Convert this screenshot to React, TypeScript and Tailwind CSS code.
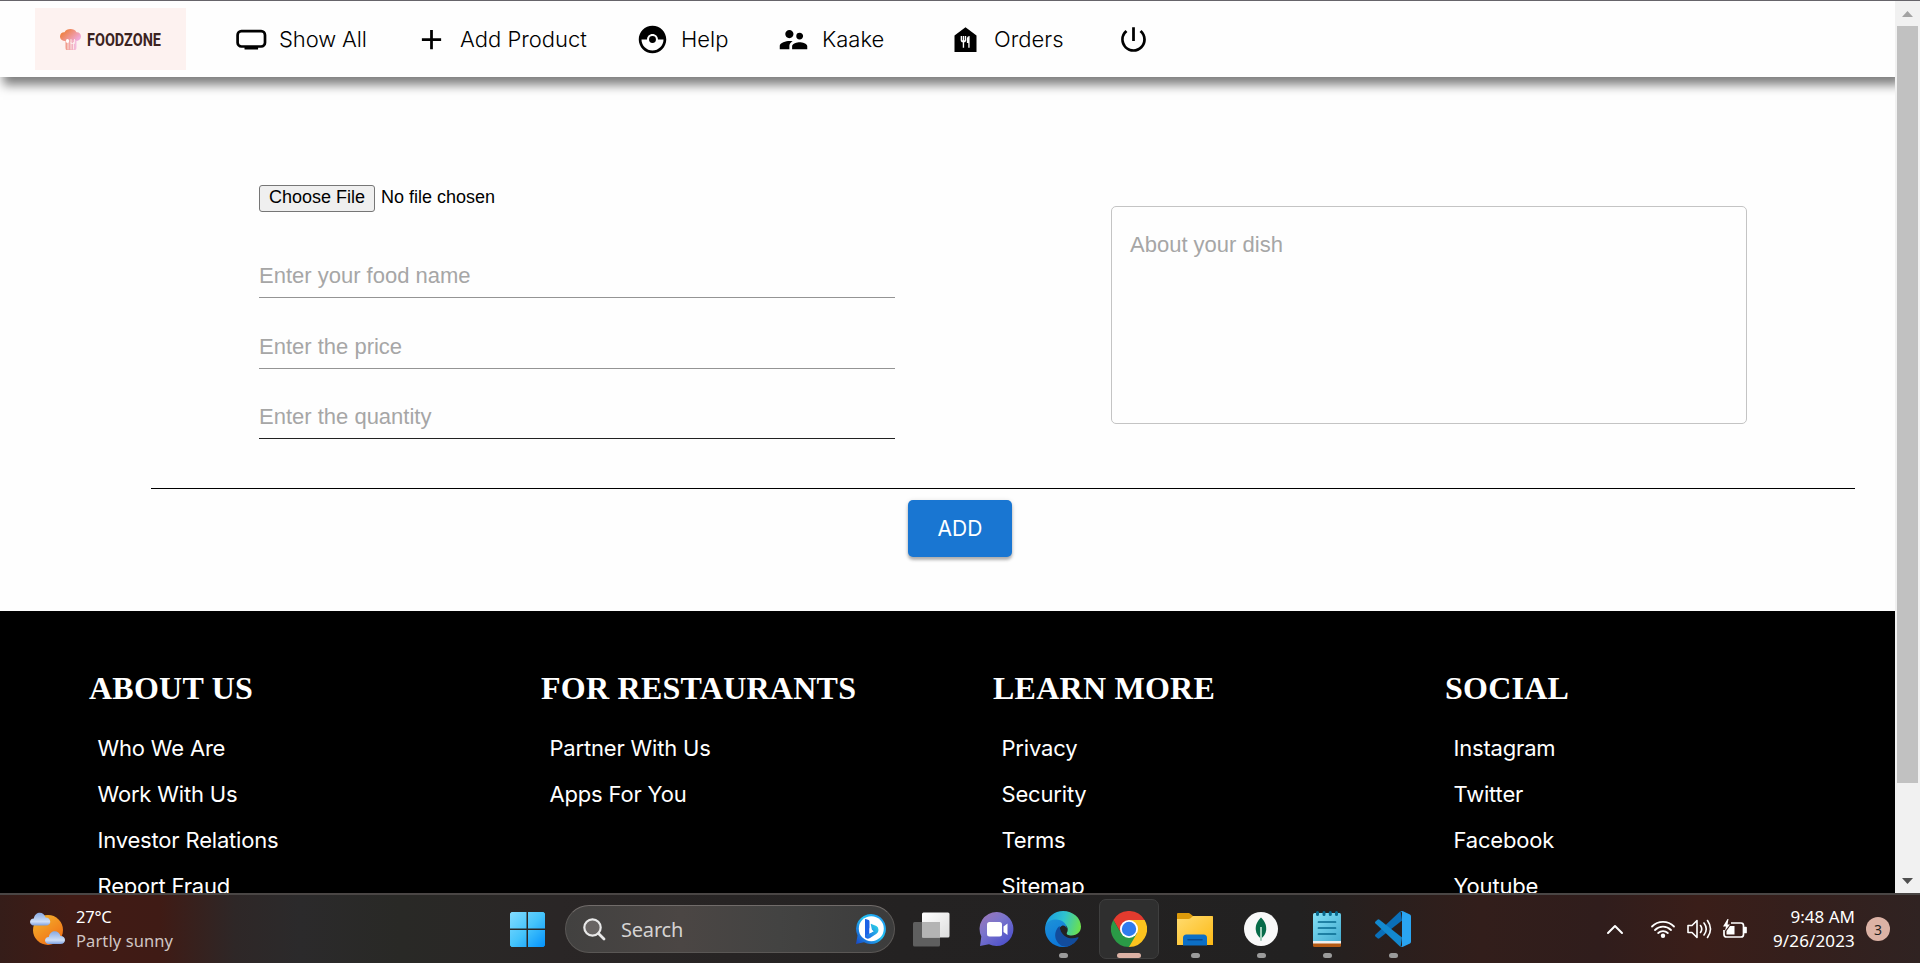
import React from "react";
import { MdAdd, MdCatchingPokemon, MdSupervisorAccount, MdFoodBank, MdPowerSettingsNew } from "react-icons/md";

const columns = [
  { title: "ABOUT US", links: ["Who We Are", "Work With Us", "Investor Relations", "Report Fraud"] },
  { title: "FOR RESTAURANTS", links: ["Partner With Us", "Apps For You"] },
  { title: "LEARN MORE", links: ["Privacy", "Security", "Terms", "Sitemap"] },
  { title: "SOCIAL", links: ["Instagram", "Twitter", "Facebook", "Youtube"] },
];

const fields = [
  { label: "Enter your food name", className: "mt-[41px] h-[45px] border-[#949494]" },
  { label: "Enter the price", className: "mt-[26px] h-[45px] border-[#949494]" },
  { label: "Enter the quantity", className: "mt-[25px] h-[45px] border-[#212121]" },
];

function TvIcon() {
  return (
    <svg width="31" height="21" viewBox="0 0 31 21" className="block">
      <rect x="1.6" y="2.1" width="27.4" height="15.400" rx="3.8" fill="none" stroke="#000" strokeWidth="2.7" />
      <rect x="8.5" y="18" width="13.600" height="2.600" rx="0.6" />
    </svg>
  );
}

function Logo() {
  return (
    <div className="ml-[35px] flex h-[62px] w-[151px] items-center bg-[#fdf2f0] pl-[25px]">
      <svg width="21" height="21" viewBox="0 0 21 21" className="block">
        <defs>
          <linearGradient id="hat" x1="0" y1="0" x2="1" y2="0.6">
            <stop offset="0.15" stopColor="#ee7d35" />
            <stop offset="1" stopColor="#f0a8d6" />
          </linearGradient>
          <linearGradient id="fork" x1="0" y1="0" x2="1" y2="0">
            <stop stopColor="#f19a86" />
            <stop offset="1" stopColor="#f4bfe2" />
          </linearGradient>
        </defs>
        <path d="M4.500 12C1 11.500 0 9 0 7.500 0 4.500 2.500 3 4.500 3.300 5.500 1 8 0 10.500 0c2.500 0 5 1 6 3.300C19 3 21 5 21 7.500c0 2.500-2 4-4.500 4.500z" fill="url(#hat)" />
        <path d="M5.500 11h11v7c0 2-.5 3-1.500 3H6.500c-.7 0-1-1-1-3z" fill="url(#fork)" />
        <path d="M8 11v9.500M11 13v7.500M13.500 13v7.500" stroke="#fdf2f0" strokeWidth="0.800" />
        <ellipse cx="7.500" cy="12" rx="1.600" ry="2" fill="#fff" />
        <path d="M11 10v4.500h3.500V10" fill="none" stroke="#fdf2f0" strokeWidth="0.800" />
      </svg>
      <svg width="78" height="22" viewBox="0 0 78 22" className="ml-[5px] block overflow-visible">
        <text x="1" y="18.200" textLength="74" lengthAdjust="spacingAndGlyphs" fill="#3b2320" className="font-['Roboto'] text-[19px] font-bold">FOODZONE</text>
      </svg>
    </div>
  );
}

function Nav() {
  return (
    <nav className="relative z-10 flex h-[76px] shrink-0 items-center bg-[#fefefe] font-['Inter',sans-serif] text-[22px] font-light text-black shadow-[5px_6px_10px_2px_rgba(0,0,0,0.5)]">
      <Logo />
      <div className="ml-[50px] flex w-[179px] items-center gap-[12px]"><TvIcon /><span className="tracking-[-0.1px]">Show All</span></div>
      <div className="flex w-[221px] items-center gap-[12px]"><MdAdd size={33} /><span>Add Product</span></div>
      <div className="flex w-[141px] items-center gap-[12px]"><MdCatchingPokemon size={33} /><span>Help</span></div>
      <div className="flex w-[172px] items-center gap-[12px]"><MdSupervisorAccount size={33} /><span>Kaake</span></div>
      <div className="flex w-[168px] items-center gap-[12px]"><MdFoodBank size={33} /><span>Orders</span></div>
      <MdPowerSettingsNew size={33} />
    </nav>
  );
}

function ProductForm() {
  return (
    <main className="h-[534px] shrink-0 bg-[#fefefe] font-['Liberation_Sans',sans-serif]">
      <div className="flex h-[411px] items-start pl-[259px]">
        <div className="w-[636px] pt-[108px]">
          <div className="flex items-start text-[18px] text-black">
            <button className="h-[27px] w-[116px] rounded-[3px] border border-[#767676] bg-[#efefef] pb-[2px] leading-[23px]">Choose File</button>
            <span className="ml-[6px] leading-[25px]">No file chosen</span>
          </div>
          {fields.map((f) => (
            <div key={f.label} className={`${f.className} border-b text-[22px] leading-[46px] text-[#a6a6a6]`}>{f.label}</div>
          ))}
        </div>
        <div className="ml-[216px] mt-[129px] h-[218px] w-[636px] rounded-[5px] border border-[#c4c4c4] pl-[18px] pt-[21px] text-[22px] leading-[34px] text-[#a6a6a6]">
          About your dish
        </div>
      </div>
      <div className="ml-[151px] h-px w-[1704px] bg-black" />
      <div className="flex pl-[908px] pt-[11px]">
        <button className="h-[57px] w-[104px] rounded-[5px] bg-[#1976d2] font-['Inter',sans-serif] text-[21px] font-normal text-white shadow-[0_3px_3px_rgba(0,0,0,0.25),0_1px_5px_rgba(0,0,0,0.15)]">ADD</button>
      </div>
    </main>
  );
}

function Footer() {
  return (
    <footer className="flex min-h-0 grow bg-black pl-[89px] text-white">
      {columns.map((c) => (
        <div key={c.title} className="w-[452px] shrink-0 pt-[58px]">
          <h2 className="whitespace-nowrap font-['Liberation_Serif',serif] text-[32px] font-bold leading-[38px] tracking-[0.25px]">{c.title}</h2>
          <ul className="mt-[18px] pl-[8.500px] font-['Inter',sans-serif] text-[22px] tracking-[-0.18px]">
            {c.links.map((l) => <li key={l} className="h-[46px] leading-[46px]">{l}</li>)}
          </ul>
        </div>
      ))}
    </footer>
  );
}

function Scrollbar() {
  return (
    <div className="flex w-[25px] flex-col items-center bg-[#f1f1f1]">
      <svg width="25" height="25" viewBox="0 0 25 25" className="block"><path d="M7 16h11l-5.500-6z" fill="#a3a3a3" /></svg>
      <div className="h-[757px] w-[21px] bg-[#c1c1c1]" />
      <div className="grow" />
      <svg width="25" height="25" viewBox="0 0 25 25" className="block"><path d="M7 10h11l-5.500 6z" fill="#505050" /></svg>
    </div>
  );
}

function Weather() {
  return (
    <svg width="37" height="34" viewBox="0 0 37 34" className="block">
      <defs>
        <linearGradient id="sun" x1="0" y1="0" x2="0.7" y2="1"><stop stopColor="#f2b92f" /><stop offset="1" stopColor="#f26f16" /></linearGradient>
        <linearGradient id="cloud" x1="0" y1="0" x2="0" y2="1"><stop stopColor="#86a9e3" /><stop offset="0.700" stopColor="#cfdff7" /><stop offset="1" stopColor="#7da0e0" /></linearGradient>
      </defs>
      <circle cx="19" cy="18" r="15" fill="url(#sun)" />
      <path d="M5 13.500C-.5 13.500 0 6.500 4.800 6.500 6-1 15-1 16.500 5.500c6 0 6.500 8 .5 8z" fill="url(#cloud)" />
      <path d="M20 32C14.500 32 15 25 19.800 25 21 17.500 30 17.500 31.500 24c6 0 6 8 0 8z" fill="url(#cloud)" />
    </svg>
  );
}

function Start() {
  return (
    <svg width="35" height="35" viewBox="0 0 35 35" className="block">
      <defs><linearGradient id="win" gradientUnits="userSpaceOnUse" x1="0" y1="0" x2="35" y2="35"><stop stopColor="#83dcff" /><stop offset="0.500" stopColor="#45c4fb" /><stop offset="1" stopColor="#0492fb" /></linearGradient></defs>
      <path d="M1.500 0H16.500V16.500H0V1.500zM18 0H33.500L35 1.500V16.500H18zM0 18H16.500V35H1.500L0 33.500zM18 18H35V33.500L33.500 35H18z" fill="url(#win)" />
    </svg>
  );
}

function Bing() {
  return (
    <svg width="30" height="30" viewBox="0 0 30 30" className="block">
      <defs>
        <linearGradient id="bing" x1="1" y1="0" x2="0" y2="1"><stop stopColor="#1a8df0" /><stop offset="0.450" stopColor="#22c3f3" /><stop offset="1" stopColor="#1745c8" /></linearGradient>
        <linearGradient id="bowl" x1="1" y1="0" x2="0" y2="1"><stop stopColor="#2bdce6" /><stop offset="1" stopColor="#1e5fe6" /></linearGradient>
      </defs>
      <path d="M15 0a15 15 0 1 1-7 28.300L0 30l1.500-8.500A15 15 0 0 1 15 0z" fill="url(#bing)" />
      <circle cx="15.300" cy="14.700" r="12.500" fill="#fff" />
      <path d="M9 5.500q0-.6.600-.4l3 1q.9.400.9 1.300V20l-4.500 4z" fill="#1c62e6" />
      <path d="M14.800 10.500q-.3-.9.600-.6l5 2.200q2.100 1.100 2.100 3.800 0 2.500-2 3.800l-6.500 4.300q-2 1.200-3.800.3Q9 23.300 9 21.500l4.500-2 4-2.300-1.500-1z" fill="url(#bowl)" />
      <path d="M13.500 14l4 3.200-4 2.300z" fill="#fff" />
    </svg>
  );
}

function TaskView() {
  return (
    <svg width="37" height="35" viewBox="0 0 37 35" className="block">
      <defs><linearGradient id="tv" x1="0" y1="0" x2="1" y2="1"><stop stopColor="#fff" /><stop offset="1" stopColor="#ddd" /></linearGradient></defs>
      <rect x="0" y="10" width="27" height="24.500" rx="1.500" fill="#5f5f5f" />
      <rect x="9" y="0.500" width="27.500" height="25" rx="1.500" fill="url(#tv)" />
      <path d="M9 10h18v15.500H9z" fill="#b4b4b4" />
    </svg>
  );
}

function Chat() {
  return (
    <svg width="36" height="36" viewBox="0 0 36 36" className="block">
      <defs><linearGradient id="chat" x1="0" y1="0" x2="0.800" y2="1"><stop stopColor="#a077b5" /><stop offset="0.450" stopColor="#7a74cc" /><stop offset="1" stopColor="#4a4ecb" /></linearGradient></defs>
      <path d="M18 1a17 17 0 1 1-8 32.300L1 35l1.300-9.500A17 17 0 0 1 18 1z" fill="url(#chat)" />
      <rect x="8" y="11" width="15" height="14.500" rx="2.500" fill="#fff" />
      <path d="M24.500 15.500l4-3v11.500l-4-3z" fill="#fff" />
    </svg>
  );
}

function Edge() {
  return (
    <svg width="36" height="36" viewBox="0 0 36 36" className="block">
      <defs>
        <linearGradient id="e1" x1="0" y1="0.300" x2="1" y2="0.500"><stop stopColor="#1b9de2" /><stop offset="0.500" stopColor="#2fc3cf" /><stop offset="1" stopColor="#6be04f" /></linearGradient>
        <linearGradient id="e2" x1="0" y1="0" x2="0.500" y2="1"><stop stopColor="#1d92d8" /><stop offset="1" stopColor="#0b76da" /></linearGradient>
      </defs>
      <path d="M.5 14.500C2.500 5.500 9.500 0 18 0c10 0 18 7 18 15.500 0 5.500-4 9-9.500 9-3.500 0-5.500-1.300-4.500-3 2-3.500 0-8-5-9.500C11 10 4 11 .5 14.500z" fill="url(#e1)" />
      <path d="M0 18C0 11 5.500 8.500 11 8.500c6 0 11 4 10.500 9-.5-2.500-2.500-3.500-4-3-4 1.300-4.500 7-2.500 10.500 3 6 10 8 15 5.500C26.500 34.500 22 36 18 36 8 36 0 28 0 18z" fill="url(#e2)" />
      <path d="M14.500 15c-6 5-6 14.500 1.500 19.500 2 1 4.500 1.500 7 1 4.500-1.500 8-4.500 10.500-8.500.3-.7-.2-1-.8-.7C26 29 16 27 14.500 15z" fill="#124c9c" />
    </svg>
  );
}

function Chrome() {
  return (
    <svg width="36" height="36" viewBox="0 0 36 36" className="block">
      <path d="M2.400 9A18 18 0 0 1 33.600 9L26 18 10.200 22.500z" fill="#e33b2e" />
      <path d="M33.600 9A18 18 0 0 1 18 36l-2-7 9.800-6.500L18 9z" fill="#fcc31e" />
      <path d="M2.400 9A18 18 0 0 0 18 36l7.800-13.500H10.200z" fill="#2a9a46" />
      <circle cx="18" cy="18" r="9" fill="#fff" />
      <circle cx="18" cy="18" r="7.200" fill="#2f7bee" />
    </svg>
  );
}

function Folder() {
  return (
    <svg width="36" height="34" viewBox="0 0 36 34" className="block">
      <defs><linearGradient id="fold" x1="0" y1="0" x2="1" y2="1"><stop stopColor="#ffdc70" /><stop offset="1" stopColor="#fdb914" /></linearGradient></defs>
      <path d="M1 1h10.500q1 0 1.700.7L16 4H36V12H0V2q0-1 1-1z" fill="#dd9b0b" />
      <path d="M0 7h11.500q1 0 2-.8L16 4h18.500Q36 4 36 5.500V33H0z" fill="url(#fold)" />
      <path d="M6 33.500V26q0-3.500 3.500-3.500h17Q30 22.500 30 26v7.500z" fill="#0c6fc6" />
      <path d="M11 27.700h14" stroke="#084a91" strokeWidth="1.500" strokeLinecap="round" />
    </svg>
  );
}

function Mongo() {
  return (
    <svg width="34" height="34" viewBox="0 0 34 34" className="block">
      <circle cx="17" cy="17" r="17" fill="#f8f8f8" />
      <path d="M17 5.500c5 5 5.500 9 5.200 12.500-.4 4-2.700 6.500-4.400 8L17.500 28.500h-1L16.200 26c-2-1.700-4-4-4.400-8C11.500 14.500 12 10.500 17 5.500z" fill="#076b49" />
      <path d="M17 15v13" stroke="#9fcfb9" strokeWidth="2" />
    </svg>
  );
}

function Notepad() {
  return (
    <svg width="28" height="36" viewBox="0 0 28 36" className="block">
      <defs><linearGradient id="note" x1="0" y1="0" x2="1" y2="1"><stop stopColor="#84e1f7" /><stop offset="1" stopColor="#44acd0" /></linearGradient></defs>
      <rect x="0" y="28" width="28" height="8" rx="1.500" fill="#b55a14" />
      <path d="M0 28h28v4.500H0z" fill="#eee" />
      <path d="M1.500 2h25Q28 2 28 3.500V30H0V3.500Q0 2 1.500 2z" fill="url(#note)" />
      <path d="M5.500 11h17M5.500 17h17M5.500 23h17" stroke="#07698e" strokeWidth="1.700" strokeLinecap="round" />
      <path d="M4.500 1.500v2M11 1.500v2M17.300 1.500v2M23.500 1.500v2" stroke="#07698e" strokeWidth="3" strokeLinecap="round" />
    </svg>
  );
}

function Code() {
  return (
    <svg width="36" height="36" viewBox="0 0 36 36" className="block">
      <path d="M25.500 0L27 9.500 4.500 27.300q-1 .7-2 0L.5 25.500q-1-1 0-2z" fill="#0a6fb9" />
      <path d="M25.500 36L27 26.500 4.500 8.700q-1-.7-2 0L.5 10.500q-1 1 0 2z" fill="#1389cf" />
      <path d="M25.500.2Q26.500-.3 28 .3L35 3.500Q36 4 36 5.500v25q0 1.500-1 2L28 35.700q-1.500.6-2.500-.2 1.500.5 1.500-1.500V2q0-2-1.500-1.800z" fill="#2aa5f2" />
    </svg>
  );
}

function TaskApp({ children, active = false, dot = true }: { children: React.ReactNode; active?: boolean; dot?: boolean }) {
  return (
    <div className={`flex h-[60px] w-[60px] shrink-0 flex-col items-center rounded-[7px] border ${active ? "border-[#3f3f3f] bg-[#2f2f2f]" : "border-transparent"}`}>
      <div className="flex h-[53px] items-center pt-[4px]">{children}</div>
      {dot && <div className={`h-[5px] shrink-0 rounded-full ${active ? "w-[24px] bg-[#dcb2a5]" : "w-[9px] bg-[#9b9b9b]"}`} />}
    </div>
  );
}

function Taskbar() {
  return (
    <div className="flex h-[70px] shrink-0 items-center border-t-2 border-[#4a4645] bg-[linear-gradient(90deg,#351d19_0px,#411b15_70px,#3f1b15_160px,#2e2727_235px,#2b2a2b_300px,#292926_400px,#2a2626_560px,#242222_900px,#222121_1300px,#2a1f1d_1390px,#321e1b_1480px,#301d1c_1600px,#3a1e19_1700px,#351f1c_1790px,#302322_1920px)] font-['Noto_Sans',sans-serif] text-white">
      <div className="ml-[29px] flex w-[481px] items-center gap-[10px]">
        <Weather />
        <div className="text-[16.500px] leading-[24px]"><div className="tracking-[-0.2px]">27°C</div><div className="tracking-[0.1px] text-[#d0c5c3]">Partly sunny</div></div>
      </div>
      <Start />
      <div className="ml-[20px] flex h-[48px] w-[330px] items-center rounded-full border border-[#5a5755] border-t-[#716c6a] bg-[linear-gradient(90deg,#424140,#4b4644_35%,#434342_65%,#3c3c3c)] pl-[17px] pr-[8px]">
        <svg width="23" height="23" viewBox="0 0 23 23" fill="none" stroke="#e8e8e8" strokeWidth="2.200" strokeLinecap="round"><circle cx="9.500" cy="9.500" r="8.200" fill="#686463" /><path d="M15.500 15.500l5.500 5.500" strokeWidth="2.800" /></svg>
        <span className="ml-[15px] grow pt-px text-[20px] tracking-[-0.2px] text-[#d5d3d2]">Search</span>
        <Bing />
      </div>
      <div className="ml-[18px]"><TaskView /></div>
      <div className="ml-[17px] flex gap-[6px]">
        <TaskApp dot={false}><Chat /></TaskApp>
        <TaskApp><Edge /></TaskApp>
        <TaskApp active><Chrome /></TaskApp>
        <TaskApp><Folder /></TaskApp>
        <TaskApp><Mongo /></TaskApp>
        <TaskApp><Notepad /></TaskApp>
        <TaskApp><Code /></TaskApp>
      </div>
      <div className="flex grow items-center justify-end">
        <svg width="18" height="11" viewBox="0 0 18 11" fill="none" stroke="#fff" strokeWidth="2" strokeLinecap="round" strokeLinejoin="round"><path d="M2 9l7-7 7 7" /></svg>
        <svg width="26" height="20" viewBox="0 0 26 20" fill="none" stroke="#fff" strokeWidth="1.800" strokeLinecap="round" className="ml-[26px]"><path d="M2 7.500a15.500 15.500 0 0 1 22 0M5 11a11.300 11.300 0 0 1 16 0M8.200 14a6.900 6.900 0 0 1 9.600 0" /><circle cx="13" cy="16.800" r="2.200" fill="#fff" stroke="none" /></svg>
        <svg width="26" height="22" viewBox="0 0 26 22" fill="none" stroke="#fff" strokeWidth="1.600" strokeLinecap="round" strokeLinejoin="round" className="ml-[10px]"><path d="M2 7.500h4l5-5v17l-5-5H2zM14.500 7.500q2.500 3.500 0 7M18 5q4.500 6 0 12M21.500 2.500q6 8.500 0 17" /></svg>
        <svg width="26" height="22" viewBox="0 0 26 22" fill="none" stroke="#fff" strokeWidth="1.700" strokeLinejoin="round" className="ml-[10px]"><path d="M9 5h10q2.500 0 2.500 2.500v9q0 2.500-2.500 2.500H4.500Q2 19 2 16.500V12" /><path d="M8 8h4.500v8.500H4.500V13z" fill="#fff" stroke="none" /><path d="M5.500 1L1 8.500h3L3 13l5-6.500H5.500L6.500 1z" fill="#fff" stroke="none" /><path d="M22.500 9.500h1.500v5h-1.500z" fill="#fff" /></svg>
        <div className="ml-[17px] w-[90px] text-right text-[17px] leading-[24px]"><div>9:48 AM</div><div className="tracking-[0.15px]">9/26/2023</div></div>
        <div className="ml-[11px] mr-[30px] flex h-[24px] w-[24px] items-center justify-center rounded-full bg-[#dcb2a5] text-[14px] text-[#1f1f1f]">3</div>
      </div>
    </div>
  );
}

export default function App() {
  return (
    <div className="flex h-[963px] w-[1920px] flex-col overflow-hidden bg-white">
      <div className="flex h-[893px] border-t border-[#66646a]">
        <div className="flex w-[1895px] flex-col overflow-hidden">
          <Nav />
          <ProductForm />
          <Footer />
        </div>
        <Scrollbar />
      </div>
      <Taskbar />
    </div>
  );
}
